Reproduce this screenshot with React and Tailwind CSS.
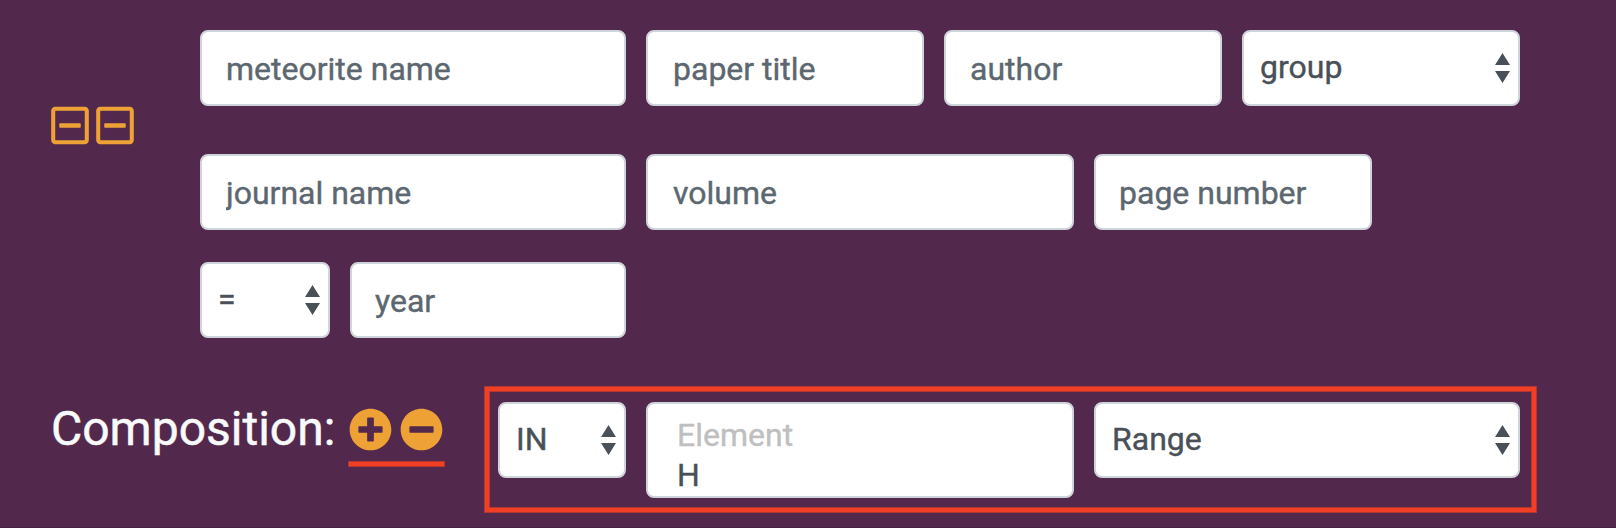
import { FaRegMinusSquare, FaPlusCircle, FaMinusCircle } from "react-icons/fa";

function Field({ text, className = "" }) {
  return (
    <input
      type="text"
      placeholder={text}
      className={`block h-[76px] shrink-0 rounded-[8px] border-2 border-[#ced4da] bg-white pt-px text-[32px] text-[#495057] placeholder:text-[#5c6770] placeholder:opacity-100 outline-none [-webkit-text-stroke:0.4px] ${className}`}
    />
  );
}

function Select({ text, className = "" }) {
  return (
    <button
      type="button"
      className={`flex h-[76px] shrink-0 items-center justify-between rounded-[8px] border-2 border-[#ced4da] bg-white pl-4 pr-2 text-left text-[32px] leading-none text-[#495057] [-webkit-text-stroke:0.4px] ${className}`}
    >
      <span className="pb-[3px]">{text}</span>
      <svg width="15" height="30" viewBox="0 0 15 30" fill="#495057">
        <path d="M0 12 7.5 0 15 12zM0 18 7.5 30 15 18z" />
      </svg>
    </button>
  );
}

export default function App() {
  return (
    <div className="flex h-[528px] w-[1616px] flex-col overflow-hidden border-b border-[#44213f] bg-[#52294c] font-['Roboto',sans-serif]">
      <div className="flex h-[356px] pt-[30px]">
        <div className="flex w-[200px] gap-[7px] pl-[51px] pt-[74px] text-[#eea236]">
          <FaRegMinusSquare className="h-[43px] w-[38px]" />
          <FaRegMinusSquare className="h-[43px] w-[38px]" />
        </div>
        <div className="flex flex-col">
          <div className="flex gap-5">
            <Field text="meteorite name" className="w-[426px] pl-6" />
            <Field text="paper title" className="w-[278px] pl-[25px]" />
            <Field text="author" className="w-[278px] pl-6" />
            <Select text="group" className="w-[278px]" />
          </div>
          <div className="mt-12 flex gap-5">
            <Field text="journal name" className="w-[426px] pl-6" />
            <Field text="volume" className="w-[428px] pl-[25px]" />
            <Field text="page number" className="w-[278px] pl-[23px]" />
          </div>
          <div className="mt-8 flex gap-5">
            <Select text="=" className="w-[130px]" />
            <Field text="year" className="w-[276px] pl-[23px]" />
          </div>
        </div>
      </div>
      <div className="flex pt-[30px]">
        <div className="flex w-[484px] pl-[51px]">
          <h2 className="w-[297px] pt-[14px] text-[48px] leading-[58px] text-[#f8f9fa] [-webkit-text-stroke:0.5px]">Composition:</h2>
          <div className="flex h-[81px] w-[97px] flex-col justify-between pt-[22px]">
            <div className="flex gap-2 pl-px text-[#eea236]">
              <FaPlusCircle className="size-[43px]" />
              <FaMinusCircle className="size-[43px]" />
            </div>
            <div className="h-1.5 border border-[#b1372f] bg-[#f03f25]" />
          </div>
        </div>
        <div className="h-[127px] w-[1053px] border border-[#b1372f] bg-[#b1372f]">
          <div className="h-full border-4 border-[#f03f25]">
            <div className="flex h-full items-start gap-5 border border-[#b1372f] bg-[#52294c] pl-2 pt-[10px]">
              <Select text="IN" className="w-[128px]" />
              <div className="h-[96px] w-[428px] shrink-0 overflow-hidden rounded-[8px] border-2 border-[#ced4da] bg-white pl-[29px] pt-[11px] text-[32px] leading-10 text-[#495057] [-webkit-text-stroke:0.4px]">
                <div className="text-[#bfbfbf]">Element</div>
                <div>H</div>
              </div>
              <Select text="Range" className="w-[426px]" />
            </div>
          </div>
        </div>
      </div>
    </div>
  );
}
